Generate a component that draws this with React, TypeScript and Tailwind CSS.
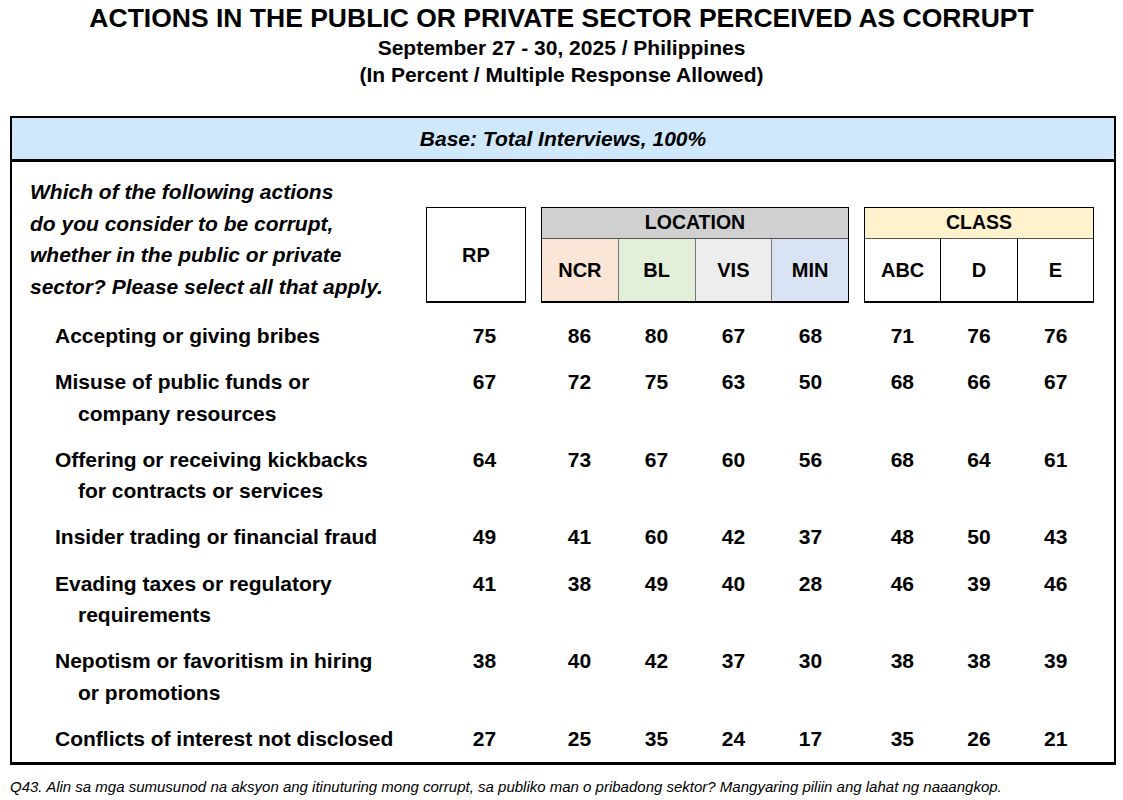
import React from "react";

type Row = { label: string[]; v: number[] };

const rows: Row[] = [
  { label: ["Accepting or giving bribes"], v: [75, 86, 80, 67, 68, 71, 76, 76] },
  { label: ["Misuse of public funds or", "company resources"], v: [67, 72, 75, 63, 50, 68, 66, 67] },
  { label: ["Offering or receiving kickbacks", "for contracts or services"], v: [64, 73, 67, 60, 56, 68, 64, 61] },
  { label: ["Insider trading or financial fraud"], v: [49, 41, 60, 42, 37, 48, 50, 43] },
  { label: ["Evading taxes or regulatory", "requirements"], v: [41, 38, 49, 40, 28, 46, 39, 46] },
  { label: ["Nepotism or favoritism in hiring", "or promotions"], v: [38, 40, 42, 37, 30, 38, 38, 39] },
  { label: ["Conflicts of interest not disclosed"], v: [27, 25, 35, 24, 17, 35, 26, 21] },
];

const font = { fontFamily: '"Liberation Sans", Arial, sans-serif' };

export default function App() {
  return (
    <div className="w-[1123px] h-[800px] bg-white text-black overflow-hidden" style={font}>
      <div className="flex flex-col items-center pt-[3px]">
        <div className="text-[26.5px] font-bold leading-[30px]">
          ACTIONS IN THE PUBLIC OR PRIVATE SECTOR PERCEIVED AS CORRUPT
        </div>
        <div className="text-[21px] font-bold leading-[27px] mt-[1px]">September 27 - 30, 2025 / Philippines</div>
        <div className="text-[21px] font-bold leading-[27px]">(In Percent / Multiple Response Allowed)</div>
      </div>

      <div className="ml-[10px] mt-[28px] w-[1106px] h-[649px] border-2 border-black border-b-[3px] flex flex-col">
        <div className="h-[44px] shrink-0 bg-[#cfe8fb] border-b-[3px] border-black flex items-center justify-center text-[21px] font-bold italic">
          Base: Total Interviews, 100%
        </div>
        <div className="flex">
          <div className="w-[414px] pl-[18px] pt-[14px] text-[21px] font-bold italic leading-[31.5px]">
            <div>Which of the following actions</div>
            <div>do you consider to be corrupt,</div>
            <div>whether in the public or private</div>
            <div>sector? Please select all that apply.</div>
          </div>
          <div className="mt-[45px] flex items-start">
            <div className="w-[100px] h-[96px] border border-black border-b-2 flex items-center justify-center text-[20px] font-bold">
              RP
            </div>
            <div className="ml-[15px] w-[308px] h-[96px] border border-black border-b-2 flex flex-col">
              <div className="h-[31px] bg-[#d0d0d0] border-b border-[#555] flex items-center justify-center text-[19.5px] font-bold">
                LOCATION
              </div>
              <div className="flex flex-1 text-[20px] font-bold">
                <div className="flex-1 bg-[#fbe5d6] flex items-center justify-center">NCR</div>
                <div className="flex-1 bg-[#e2efd9] border-l border-[#777] flex items-center justify-center">BL</div>
                <div className="flex-1 bg-[#ededed] border-l border-[#777] flex items-center justify-center">VIS</div>
                <div className="flex-1 bg-[#dae3f3] border-l border-[#777] flex items-center justify-center">MIN</div>
              </div>
            </div>
            <div className="ml-[15px] w-[230px] h-[96px] border border-black border-b-2 flex flex-col">
              <div className="h-[31px] bg-[#fff2cc] border-b border-[#555] flex items-center justify-center text-[19.5px] font-bold">
                CLASS
              </div>
              <div className="flex flex-1 text-[20px] font-bold">
                <div className="flex-1 flex items-center justify-center">ABC</div>
                <div className="flex-1 border-l border-black flex items-center justify-center">D</div>
                <div className="flex-1 border-l border-black flex items-center justify-center">E</div>
              </div>
            </div>
          </div>
        </div>

        <div className="mt-[17px] flex flex-col gap-[15px] text-[21px] font-bold leading-[31.3px]">
          {rows.map((r, i) => (
            <div key={i} className="flex">
              <div className="w-[414px] pl-[43px]">
                {r.label.map((l, j) => (
                  <div key={j} className={j > 0 ? "pl-[23px]" : ""}>
                    {l}
                  </div>
                ))}
              </div>
              <div className="w-[100px] pl-[17px] text-center">{r.v[0]}</div>
              <div className="ml-[15px] w-[308px] flex">
                {r.v.slice(1, 5).map((n, k) => (
                  <div key={k} className="flex-1 text-center">
                    {n}
                  </div>
                ))}
              </div>
              <div className="ml-[15px] w-[230px] flex">
                {r.v.slice(5).map((n, k) => (
                  <div key={k} className="flex-1 text-center">
                    {n}
                  </div>
                ))}
              </div>
            </div>
          ))}
        </div>
      </div>

      <div className="ml-[10px] mt-[13px] text-[15px] italic leading-[18px]">
        Q43. Alin sa mga sumusunod na aksyon ang itinuturing mong corrupt, sa publiko man o pribadong sektor? Mangyaring piliin ang lahat ng naaangkop.
      </div>
    </div>
  );
}
